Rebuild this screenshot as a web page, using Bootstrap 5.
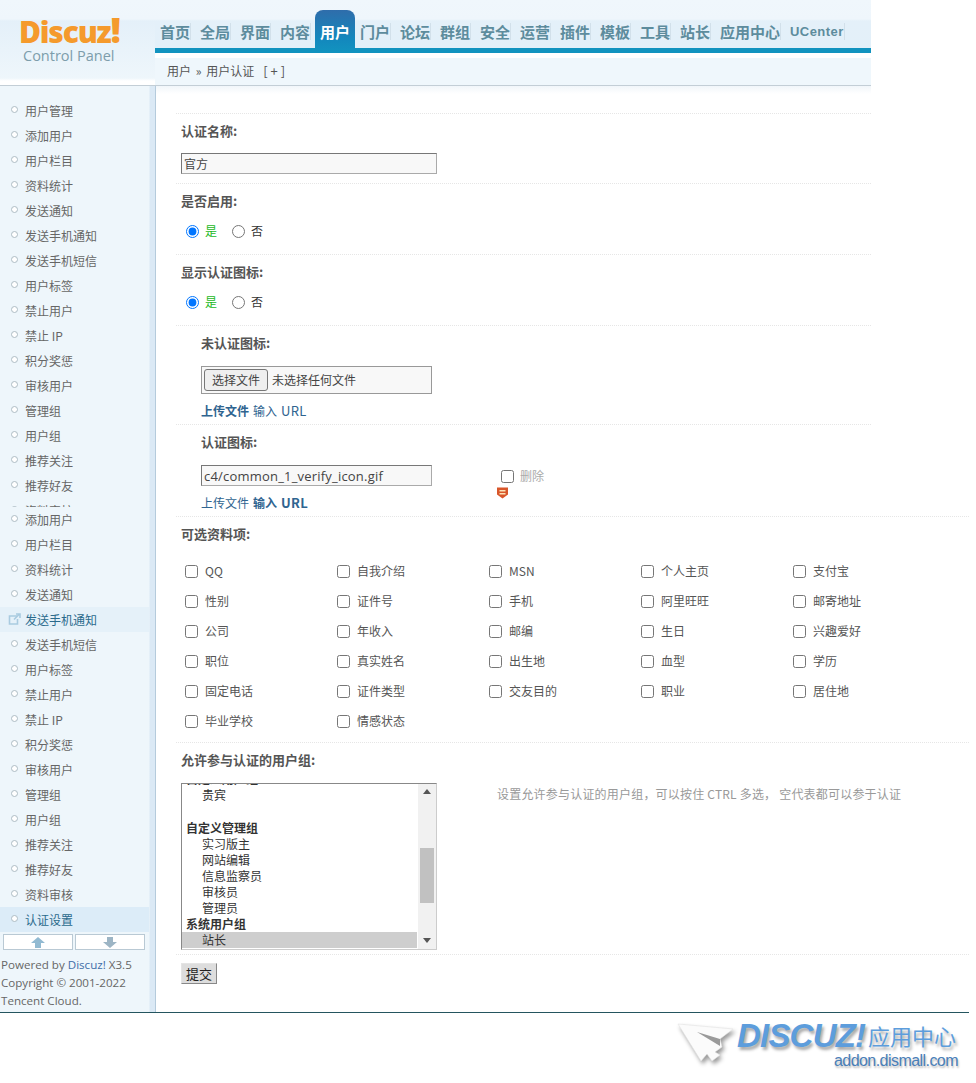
<!DOCTYPE html>
<html lang="zh-CN">
<head>
<meta charset="utf-8">
<title>Discuz! Control Panel</title>
<link href="https://cdn.jsdelivr.net/npm/bootstrap@5.3.0/dist/css/bootstrap.min.css" rel="stylesheet">
<style>
body{font-family:"Noto Sans CJK SC","Liberation Sans",sans-serif;font-size:12px;color:#555;background:#fff;margin:0;line-height:20px}
a{text-decoration:none}
.wrapx{width:969px;height:1013px;border-bottom:1px solid #24555f;overflow:hidden}
.headx{width:871px;height:86px;border-bottom:1px solid #c3ced6;background:linear-gradient(#f0f7fc 0,#eff6fc 19px,#e4f0f9 21px,#e3f0f9 48px,#f0f7fc 48px,#f0f7fc 85px)}
.logox{width:155px;height:85px;padding:11px 0 0 19px;background:linear-gradient(#f0f7fc 0,#eff6fc 19px,#e4f0f9 21px,#eef6fb 78px,#fff 81px,#fff 85px)}
.logo-main{font-family:"Open Sans","Liberation Sans",sans-serif;font-weight:800;font-size:30px;line-height:38px;height:38px;color:#f59a2c;letter-spacing:-1.2px}
.logo-main span{font-size:36px;letter-spacing:0;margin-left:0}
.logo-sub{font-family:"Open Sans","Liberation Sans",sans-serif;font-size:14.5px;line-height:16px;color:#7d9dab;margin:-1px 0 0 4px}
.navcol{width:716px}
.navx{height:48px;padding-top:10px}
.navx a{display:block;height:42px;padding:11px 0 0 5px;width:40px;font-size:15px;font-weight:700;line-height:22px;color:#5d8c9d;white-space:nowrap;position:relative}
.navx a::after{content:"";position:absolute;right:4px;top:13px;height:17px;border-right:1px solid #d2e0ea}
.navx a.on{background:linear-gradient(#2f6dab,#1388bd 70%,#1293bf);color:#fff;border-radius:8px 8px 0 0;margin-right:0;height:42px;width:40px;padding-left:5px;z-index:2}
.navx a.on::after{display:none}
.navx a.wide{width:70px}
.navx a.uc{width:64px;font-family:"Liberation Sans",sans-serif;font-size:13px;letter-spacing:.45px;padding-left:5px}
.barx{height:5px;background:#1293bf}
.crumb{height:32px;border-top:5px solid #fff;padding-left:12px;line-height:26px;background:#eff7fc;color:#555}
.crumb em{font-style:normal;margin:0 2px}
.crumb span{margin-left:9px;letter-spacing:3px;font-size:13px}
.mainx{height:926px}
.sidex{width:156px;flex:none;background:linear-gradient(90deg,#eef6fb 0,#eef6fb 149px,#dbe9f5 150px,#dbe9f5 155px,#b5cbdc 155px);padding-top:12px}
.menu-a{height:409px;overflow:hidden;width:149px}
.menu-b{height:426px;overflow:hidden;width:149px}
.mitem{display:block;height:25px;line-height:25px;padding-left:25px;color:#666;position:relative;white-space:nowrap}
.mitem::before{content:"";position:absolute;left:11px;top:8px;width:7px;height:7px;border:1px solid #adbcc4;border-radius:50%;background:#fff}
.mitem.cur{background:#e5f1f9;color:#2a6a8c}
.mitem.cur.ext::before{display:none}
.mitem.sel{background:#dcecf8;color:#2a6a8c}
.extic{position:absolute;left:8px;top:6px}
.arrows{padding:1px 0 0 3px;gap:2px}
.arrows a{display:flex;width:70px;height:16px;background:#fff;border:1px solid #b9c9d4;align-items:center;justify-content:center}
.powered{font-family:"Open Sans","Liberation Sans",sans-serif;font-size:11.6px;line-height:18px;padding:6px 0 0 1px;color:#666;white-space:nowrap}
.powered a{color:#3f6ea8}
.contentx{flex:1;padding:27px 0 0 20px;background:linear-gradient(#f1f6fa,#fff) 0 0/715px 8px no-repeat}
.frow{border-top:1px dotted #e6e6e6;padding:7px 0 0 5px}
.frow.cutx{margin-right:98px}
.h70{height:70px}.h71{height:71px}.h99{height:99px}.h92{height:92px}.h226{height:226px}.h212{height:212px}
.frow.sub{padding-left:25px}
.flabel{font-size:13px;font-weight:700;color:#555;line-height:20px;height:20px}
.txtin{display:block;width:256px;height:21px;margin-top:12px;border:1px solid #aaa;border-top-color:#777;border-left-color:#777;background:#f8f8f8;padding:0 2px;line-height:20px;color:#444;font-size:12px}
.txtin.short{width:231px;margin-top:13px;font-family:"Open Sans","Liberation Sans",sans-serif;font-size:13px;letter-spacing:.2px}
.filein{width:231px;height:28px;margin-top:13px;border:1px solid #999;background:#f8f8f8;padding:2px;color:#444}
.filebtn{height:22px;width:64px;border:1px solid #777;border-radius:3px;background:#efefef;margin-right:4px;text-align:center;line-height:20px}
.radios{height:20px;margin-top:10px;padding-left:5px}
.radios input,.chk input,.delx input{margin:0;width:13px;height:13px}
.radios label{margin:0 15px 0 6px;color:#333}
.radios label.yes{color:#1cb81c}
.uplinks{margin-top:7px;height:20px;color:#2f6490}
.uplinks b{color:#2f6490}
.uplinks span,.uplinks b{margin-right:4px}
.uplinks .latin{font-size:13px;letter-spacing:.3px}
.delbox{margin:34px 0 0 69px;position:relative;color:#aaa}
.delx{gap:6px;height:20px}
.trash{position:absolute;left:-5px;top:20px}
.chkgrid{display:grid;grid-template-columns:repeat(5,152px);grid-auto-rows:30px;margin:12px 0 0 4px}
.chk{display:flex;align-items:center;gap:7px;color:#555;font-size:12px;margin:0}
.lbx{width:256px;height:167px;margin-top:13px;border:1px solid #888;border-right-color:#ccc;border-bottom-color:#ccc;overflow:hidden;background:#fff;position:relative}
.lbx-in{margin-top:-13px;padding-right:19px;line-height:16px;color:#333}
.lbx-in b{display:block;padding-left:4px;height:16px;color:#333}
.lbx-in i{display:block;font-style:normal;padding-left:20px;height:16px}
.lbx-in i.gap17{height:17px}
.lbx-in i.pick{background:#cecece}
.sbar{position:absolute;right:0;top:0;bottom:0;width:18px;background:#f1f1f1}
.sbar u{position:absolute;left:2px;width:14px;top:64px;height:55px;background:#c1c1c1}
.sbar svg{position:absolute;left:5px}
.help{margin:14px 0 0 60px;color:#999;font-size:12px;letter-spacing:.2px;white-space:nowrap}
.subbtn{display:block;width:36px;height:21px;margin-top:1px;padding:0;font-size:13px;line-height:18px;color:#222;background:#ddd;border:1px solid #e4e4e4;border-right-color:#888;border-bottom-color:#888}
.addon{width:976px;height:69px;padding:7px 0 0 680px;position:relative}
.addon-in{margin-left:57px;white-space:nowrap}
.ad-big{font-family:"Liberation Sans",sans-serif;font-style:italic;font-weight:700;font-size:33px;line-height:31px;color:#5d9ddc;letter-spacing:-.8px;text-shadow:2px 3px 3px #aaa}
.ad-zh{font-size:22px;font-weight:300;font-style:normal;letter-spacing:0;color:#5d9ddc;margin-left:3px;vertical-align:2px}
.ad-url{font-family:"Liberation Sans",sans-serif;font-size:16px;line-height:16px;letter-spacing:-.55px;color:#4a7fb8;text-align:right;width:221px;text-shadow:1px 2px 2px #bbb}
.plane{position:absolute;left:676px;top:9px;filter:drop-shadow(2px 3px 2px #999)}
</style>
</head>
<body>
<div class="wrapx">
  <div class="headx d-flex">
    <div class="logox">
      <div class="logo-main">Discuz<span>!</span></div>
      <div class="logo-sub">Control Panel</div>
    </div>
    <div class="navcol">
      <nav class="navx d-flex">
        <a href="#">首页</a><a href="#">全局</a><a href="#">界面</a><a href="#">内容</a><a href="#" class="on">用户</a><a href="#">门户</a><a href="#">论坛</a><a href="#">群组</a><a href="#">安全</a><a href="#">运营</a><a href="#">插件</a><a href="#">模板</a><a href="#">工具</a><a href="#">站长</a><a href="#" class="wide">应用中心</a><a href="#" class="uc">UCenter</a>
      </nav>
      <div class="barx"></div>
      <div class="crumb">用户 <em>»</em> 用户认证<span>[+]</span></div>
    </div>
  </div>
  <div class="mainx d-flex">
    <aside class="sidex">
      <div class="menu-a">
        <a class="mitem" href="#">用户管理</a><a class="mitem" href="#">添加用户</a><a class="mitem" href="#">用户栏目</a><a class="mitem" href="#">资料统计</a><a class="mitem" href="#">发送通知</a><a class="mitem" href="#">发送手机通知</a><a class="mitem" href="#">发送手机短信</a><a class="mitem" href="#">用户标签</a><a class="mitem" href="#">禁止用户</a><a class="mitem" href="#">禁止 IP</a><a class="mitem" href="#">积分奖惩</a><a class="mitem" href="#">审核用户</a><a class="mitem" href="#">管理组</a><a class="mitem" href="#">用户组</a><a class="mitem" href="#">推荐关注</a><a class="mitem" href="#">推荐好友</a><a class="mitem" href="#">资料审核</a>
      </div>
      <div class="menu-b">
        <a class="mitem" href="#">添加用户</a><a class="mitem" href="#">用户栏目</a><a class="mitem" href="#">资料统计</a><a class="mitem" href="#">发送通知</a>
        <a class="mitem cur ext" href="#"><svg class="extic" width="13" height="12" viewBox="0 0 13 12"><path d="M9 3H1.500v8h8V6" fill="none" stroke="#a9cbe0" stroke-width="1.600"/><path d="M6 6.500 11 1.500M8 1h4v4" fill="none" stroke="#a9cbe0" stroke-width="1.600"/></svg>发送手机通知</a>
        <a class="mitem" href="#">发送手机短信</a><a class="mitem" href="#">用户标签</a><a class="mitem" href="#">禁止用户</a><a class="mitem" href="#">禁止 IP</a><a class="mitem" href="#">积分奖惩</a><a class="mitem" href="#">审核用户</a><a class="mitem" href="#">管理组</a><a class="mitem" href="#">用户组</a><a class="mitem" href="#">推荐关注</a><a class="mitem" href="#">推荐好友</a><a class="mitem" href="#">资料审核</a>
        <a class="mitem sel" href="#">认证设置</a>
      </div>
      <div class="arrows d-flex">
        <a href="#"><svg width="14" height="11" viewBox="0 0 14 11"><path d="M7 0 14 6H10V11H4V6H0Z" fill="#92bad2"/></svg></a>
        <a href="#"><svg width="14" height="11" viewBox="0 0 14 11"><path d="M7 11 14 5H10V0H4V5H0Z" fill="#9db5c5"/></svg></a>
      </div>
      <div class="powered">Powered by <a href="#">Discuz!</a> X3.5<br>Copyright © 2001-2022<br>Tencent Cloud.</div>
    </aside>
    <main class="contentx">
      <div class="frow cutx h70">
        <div class="flabel">认证名称:</div>
        <div class="txtin">官方</div>
      </div>
      <div class="frow cutx h71">
        <div class="flabel">是否启用:</div>
        <div class="radios d-flex align-items-center"><input type="radio" name="r1" checked><label class="yes">是</label><input type="radio" name="r1"><label>否</label></div>
      </div>
      <div class="frow cutx h71">
        <div class="flabel">显示认证图标:</div>
        <div class="radios d-flex align-items-center"><input type="radio" name="r2" checked><label class="yes">是</label><input type="radio" name="r2"><label>否</label></div>
      </div>
      <div class="frow cutx sub h99">
        <div class="flabel">未认证图标:</div>
        <div class="filein d-flex align-items-center"><div class="filebtn">选择文件</div>未选择任何文件</div>
        <div class="uplinks"><b>上传文件</b><span>输入</span><span class="latin">URL</span></div>
      </div>
      <div class="frow cutx sub h92 d-flex">
        <div>
          <div class="flabel">认证图标:</div>
          <div class="txtin short">c4/common_1_verify_icon.gif</div>
          <div class="uplinks"><span>上传文件</span><b>输入</b><b class="latin">URL</b></div>
        </div>
        <div class="delbox">
          <div class="delx d-flex align-items-center"><input type="checkbox"><span>删除</span></div>
          <svg class="trash" width="13" height="13" viewBox="0 0 13 13"><path d="M1 1.500h11v7L6.500 12.500 1 8.500z" fill="#d8562a"/><path d="M3.500 4h6v1.500h-6zM3.500 7h6v1.500h-6z" fill="#fbe3b8"/></svg>
        </div>
      </div>
      <div class="frow h226">
        <div class="flabel">可选资料项:</div>
        <div class="chkgrid">
          <label class="chk"><input type="checkbox">QQ</label><label class="chk"><input type="checkbox">自我介绍</label><label class="chk"><input type="checkbox">MSN</label><label class="chk"><input type="checkbox">个人主页</label><label class="chk"><input type="checkbox">支付宝</label>
          <label class="chk"><input type="checkbox">性别</label><label class="chk"><input type="checkbox">证件号</label><label class="chk"><input type="checkbox">手机</label><label class="chk"><input type="checkbox">阿里旺旺</label><label class="chk"><input type="checkbox">邮寄地址</label>
          <label class="chk"><input type="checkbox">公司</label><label class="chk"><input type="checkbox">年收入</label><label class="chk"><input type="checkbox">邮编</label><label class="chk"><input type="checkbox">生日</label><label class="chk"><input type="checkbox">兴趣爱好</label>
          <label class="chk"><input type="checkbox">职位</label><label class="chk"><input type="checkbox">真实姓名</label><label class="chk"><input type="checkbox">出生地</label><label class="chk"><input type="checkbox">血型</label><label class="chk"><input type="checkbox">学历</label>
          <label class="chk"><input type="checkbox">固定电话</label><label class="chk"><input type="checkbox">证件类型</label><label class="chk"><input type="checkbox">交友目的</label><label class="chk"><input type="checkbox">职业</label><label class="chk"><input type="checkbox">居住地</label>
          <label class="chk"><input type="checkbox">毕业学校</label><label class="chk"><input type="checkbox">情感状态</label>
        </div>
      </div>
      <div class="frow h212">
        <div class="flabel">允许参与认证的用户组:</div>
        <div class="d-flex">
          <div class="lbx">
            <div class="lbx-in">
              <b>自定义用户组</b><i>贵宾</i><i class="gap17"></i><b>自定义管理组</b><i>实习版主</i><i>网站编辑</i><i>信息监察员</i><i>审核员</i><i>管理员</i><b>系统用户组</b><i class="pick">站长</i>
            </div>
            <div class="sbar">
              <svg style="top:5px" width="8" height="6" viewBox="0 0 8 6"><path d="M4 0 8 5H0Z" fill="#555"/></svg>
              <u></u>
              <svg style="bottom:5px" width="8" height="6" viewBox="0 0 8 6"><path d="M4 5 8 0H0Z" fill="#555"/></svg>
            </div>
          </div>
          <div class="help">设置允许参与认证的用户组，可以按住 CTRL 多选， 空代表都可以参于认证</div>
        </div>
      </div>
      <div class="frow">
        <button type="button" class="subbtn">提交</button>
      </div>
    </main>
  </div>
</div>
<div class="addon">
  <svg class="plane" width="60" height="42" viewBox="0 0 60 42"><path d="M2 2 57 7 44 17 46 25 39 30 44 33 36 39 31 32 25 39Z" fill="#fbfbfb" stroke="#e4e4e4" stroke-width=".6"/><path d="M21 10 44 17 44 24Z" fill="#9a9a9a"/></svg>
  <div class="addon-in">
    <div class="ad-big">DISCUZ!<span class="ad-zh">应用中心</span></div>
    <div class="ad-url">addon.dismall.com</div>
  </div>
</div>
</body>
</html>
